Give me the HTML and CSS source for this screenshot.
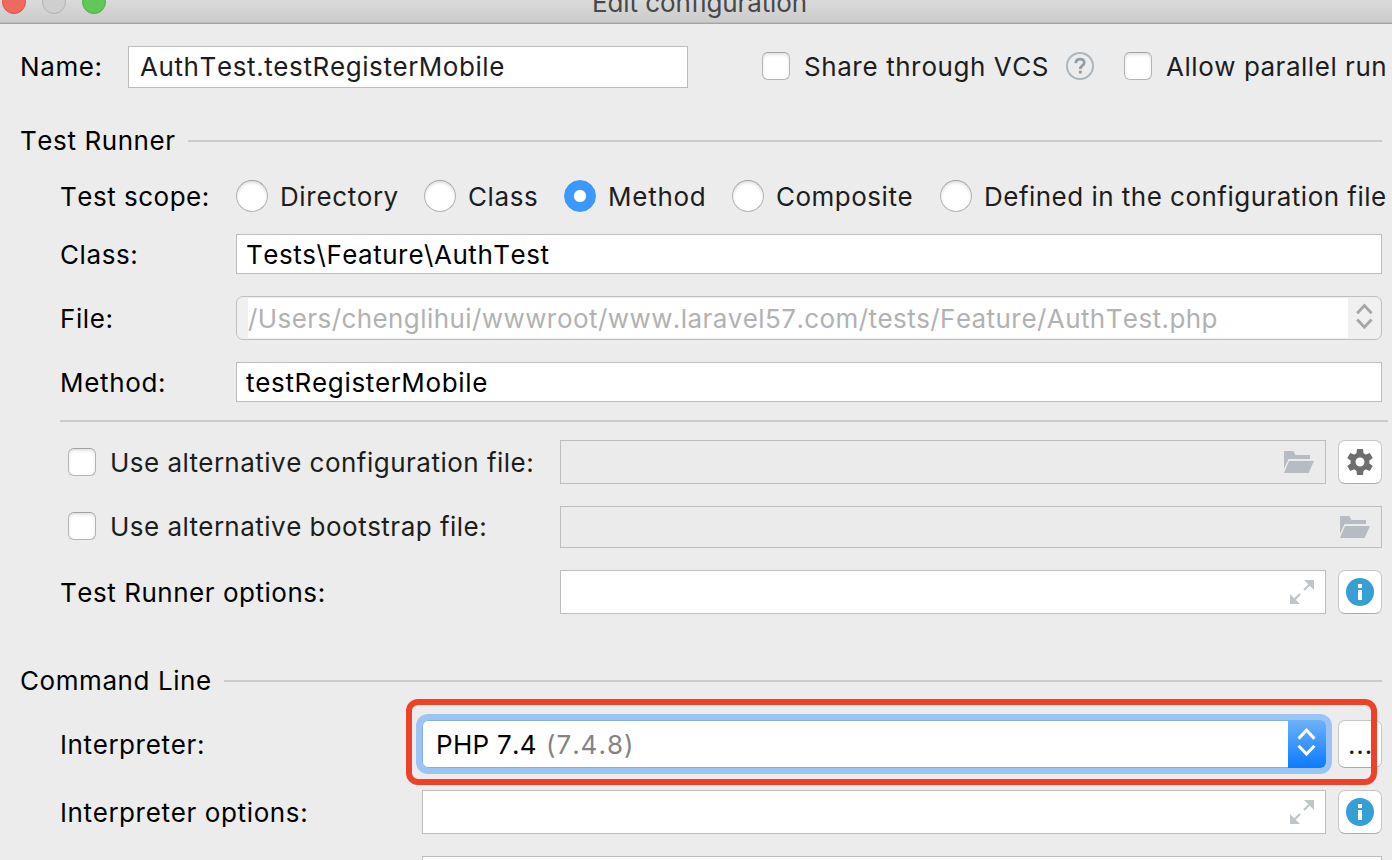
FILE: index.html
```html
<!DOCTYPE html>
<html lang="en">
<head>
<meta charset="utf-8">
<title>Edit configuration</title>
<link rel="stylesheet" href="styles.css">
</head>
<body>
<svg class="defs" width="0" height="0" aria-hidden="true">
  <symbol id="folder" viewBox="0 0 30 22">
    <path d="M0 0H9.3L11.5 4H26V8H4.6L0 17.8ZM5 10H30L24.6 22H0Z" fill="#b6bcc1"/>
  </symbol>
  <symbol id="expand" viewBox="0 0 24 24">
    <path d="M14 0H24V10ZM0 14V24H10Z" fill="#c0c5c9"/>
    <path d="M14 10L20 4M10 14L4 20" stroke="#c0c5c9" stroke-width="2.2"/>
  </symbol>
  <symbol id="info" viewBox="0 0 28 28">
    <circle cx="14" cy="14" r="14" fill="#389fd6"/>
    <path d="M12 6h4v4h-4zM12 12h4v10h-4z" fill="#fff"/>
  </symbol>
  <symbol id="gear" viewBox="-13 -13 26 26">
    <g fill="#6e6e6e">
      <path id="teeth" d="M-3 -13H3L3.6 -8H-3.6ZM-3 13H3L3.6 8H-3.6Z"/>
      <use href="#teeth" transform="rotate(60)"/>
      <use href="#teeth" transform="rotate(120)"/>
    </g>
    <circle r="7" fill="none" stroke="#6e6e6e" stroke-width="5"/>
  </symbol>
</svg>

<div class="titlebar">
  <span class="light red"></span><span class="light off"></span><span class="light green"></span>
  <span class="title">Edit configuration</span>
</div>

<main class="dialog">
  <div class="row name-row">
    <span class="name-label stem wide">Name:</span>
    <span class="field name-field">AuthTest.testRegisterMobile</span>
    <span class="check share"></span><span class="share-text">Share through VCS</span>
    <svg class="help" width="28" height="28" viewBox="0 0 28 28">
      <circle cx="14" cy="14" r="13" fill="none" stroke="#abb6be" stroke-width="2"/>
      <path d="M9.8 11.2C9.9 8.5 11.6 7.2 14.1 7.2C16.6 7.2 18.2 8.6 18.2 10.7C18.2 13.6 14.3 13.7 14.3 16.9" fill="none" stroke="#929ea7" stroke-width="2.7"/>
      <rect x="12.9" y="18.6" width="2.9" height="2.9" fill="#929ea7"/>
    </svg>
    <span class="check"></span><span class="check-text parallel">Allow parallel run</span>
  </div>

  <div class="row section runner"><span>Test Runner</span><i class="rule"></i></div>

  <div class="row scope-row">
    <span class="label text scope">Test scope:</span>
    <span class="radio"></span><span class="text opt directory">Directory</span>
    <span class="radio"></span><span class="text opt class-opt">Class</span>
    <span class="radio on"></span><span class="text opt method-opt">Method</span>
    <span class="radio"></span><span class="text opt composite">Composite</span>
    <span class="radio"></span><span class="text opt defined">Defined in the configuration file</span>
  </div>

  <div class="row class-row">
    <span class="label text">Class:</span>
    <span class="field fill"><span class="text class-value">Tests\Feature\AuthTest</span></span>
  </div>

  <div class="row file-row">
    <span class="label text stem wide">File:</span>
    <span class="filebox">
      <span class="path text">/Users/chenglihui/wwwroot/www.laravel57.com/tests/Feature/AuthTest.php</span>
      <svg class="stepper" width="32" height="42" viewBox="0 0 32 42"><path d="M8.7 16.2L15.9 8.6L23.1 16.2M8.7 22.6L15.9 30.2L23.1 22.6" fill="none" stroke="#a6a6a6" stroke-width="2.9"/></svg>
    </span>
  </div>

  <div class="row method-row">
    <span class="label text stem method-label">Method:</span>
    <span class="field fill"><span class="text method-value">testRegisterMobile</span></span>
  </div>

  <i class="separator"></i>

  <div class="row alt-row">
    <span class="alt-label"><span class="check"></span><span class="text alt-text">Use alternative configuration file:</span></span>
    <span class="field fill disabled icons"><svg width="30" height="22"><use href="#folder"/></svg></span>
    <span class="button"><svg width="26" height="26"><use href="#gear"/></svg></span>
  </div>

  <div class="row boot-row">
    <span class="alt-label"><span class="check"></span><span class="alt-text">Use alternative bootstrap file:</span></span>
    <span class="field fill disabled icons"><svg width="30" height="22"><use href="#folder"/></svg></span>
  </div>

  <div class="row options-row">
    <span class="runner-label text">Test Runner options:</span>
    <span class="field fill icons"><svg width="24" height="24"><use href="#expand"/></svg></span>
    <span class="button"><svg width="28" height="28"><use href="#info"/></svg></span>
  </div>

  <div class="row section command"><span>Command Line</span><i class="rule"></i></div>

  <div class="row interp-row">
    <span class="cmd-label text stem">Interpreter:</span>
    <span class="combo">
      <span class="text php">PHP 7.4</span><span class="text version">(7.4.8)</span>
      <svg class="arrows" width="38" height="48" viewBox="0 0 38 48"><path d="M10.6 18.6L18.5 10.3L26.4 18.6M10.6 25.8L18.5 34L26.4 25.8" fill="none" stroke="#fff" stroke-width="3"/></svg>
    </span>
    <span class="button dots">...</span>
    <span class="highlight"></span>
  </div>

  <div class="row cmd-row">
    <span class="cmd-label text stem">Interpreter options:</span>
    <span class="field fill icons"><svg width="24" height="24"><use href="#expand"/></svg></span>
    <span class="button"><svg width="28" height="28"><use href="#info"/></svg></span>
  </div>

  <div class="row next-row"><span class="cmd-label"></span><span class="field fill"></span></div>
</main>
</body>
</html>
```
FILE: styles.css
```css
* { box-sizing: border-box; }
html, body { margin: 0; height: 860px; overflow: hidden; }
body {
  background: #ececec;
  color: #000;
  font: 26px/30px Inter, "Liberation Sans", sans-serif;
  font-kerning: none;
  letter-spacing: .58px;
  white-space: nowrap;
}
.defs { display: block; position: absolute; }

.titlebar {
  display: flex;
  height: 24px;
  padding-left: 2px;
  gap: 16px;
  overflow: hidden;
  background: linear-gradient(#dadada, #cbcbcb);
  border-bottom: 1px solid #a3a3a3;
  box-shadow: inset 0 -1px #bcbcbc;
}
.light { flex: none; width: 24px; height: 24px; margin-top: -10px; border-radius: 50%; border: 1px solid; }
.light.red { background: #ee6a5f; border-color: #e0524a; }
.light.off { background: #cfcfcf; border-color: #b3b3b3; }
.light.green { background: #62c756; border-color: #51ae42; }
.title { margin: -12px 0 0 470px; color: #484848; letter-spacing: -.1px; }

.row { display: flex; align-items: center; padding-right: 10px; }
.text { padding-top: 2px; }
.wide { letter-spacing: .6px; }
.label { flex: none; width: 236px; padding-left: 60px; }
.scope { letter-spacing: .5px; }
.method-label { letter-spacing: .67px; }
.field { height: 100%; flex: none; display: flex; align-items: center; background: #fff; border: 1px solid #bdbdbd; }
.fill { flex: 1; }
.disabled { background: #ebebeb; }
.icons { justify-content: flex-end; padding-right: 11px; }
.check {
  flex: none; width: 28px; height: 28px; border-radius: 6px; background: #fff;
  border: 1px solid #b4b4b4; border-top-color: #a2a2a2; box-shadow: inset 0 2px 3px #e3e3e3;
}
.check-text, .alt-text, .opt, .share-text, .name-field { color: #1d1d1d; }

.name-row { height: 42px; margin-top: 22px; padding: 0; }
.name-label { width: 128px; padding-left: 20px; }
.name-field { width: 560px; padding-left: 11px; letter-spacing: .6px; }
.share { margin: -2px 14px 0 74px; }
.share-text { width: 262px; letter-spacing: .54px; }
.name-row .check { margin-top: -2px; }
.help { flex: none; margin: -2px 30px 0 0; display: block; }
.parallel { margin-left: 14px; letter-spacing: .54px; }

.section { height: 28px; padding-left: 20px; }
.runner { margin-top: 39px; gap: 12px; }
.command { margin-top: 53px; gap: 12px; letter-spacing: .57px; }
.rule { flex: 1; height: 2px; background: #cbcbcb; }

.scope-row { height: 32px; margin-top: 25px; padding: 0; }
.radio {
  flex: none; width: 32px; height: 32px; border-radius: 50%; background: #fff;
  border: 1px solid #b4b4b4; border-top-color: #9f9f9f; box-shadow: inset 0 2px 3px #e0e0e0;
}
.radio.on { background: radial-gradient(circle, #fff 5.6px, #3b99fc 6.6px); border-color: #3b99fc; box-shadow: none; }
.opt { flex: none; padding-left: 12px; }
.directory { width: 156px; }
.class-opt { width: 108px; }
.method-opt { width: 136px; letter-spacing: .75px; }
.composite { width: 176px; letter-spacing: .5px; }
.defined { letter-spacing: .48px; }

.class-row { height: 40px; margin-top: 22px; }
.class-value { padding-left: 9px; letter-spacing: .53px; }
.file-row { height: 44px; margin-top: 22px; }
.filebox { display: flex; flex: 1; height: 44px; border: 1px solid #bfbfbf; border-radius: 7px; background: #f0f0f0; padding-left: 11px; overflow: hidden; }
.path { flex: 1; margin: 0; padding-top: 6px; background: #fff; color: #b2b2b2; letter-spacing: .42px; border-top: 1px solid #ededed; border-bottom: 1px solid #ededed; }
.stepper { width: 33px; flex: none; display: block; }
.method-row { height: 40px; margin-top: 22px; }
.method-value { padding-left: 9px; letter-spacing: .67px; }
.separator { display: block; height: 2px; margin: 18px 4px 0 60px; background: #cbcbcb; }

.alt-label { display: flex; flex: none; align-items: center; width: 560px; padding-left: 68px; gap: 14px; letter-spacing: .49px; }
.boot-row .check { margin-top: -2px; }
.alt-row { height: 44px; margin-top: 18px; }
.boot-row { height: 42px; margin-top: 22px; }
.options-row { height: 44px; margin-top: 22px; }
.runner-label { width: 560px; padding-left: 60px; letter-spacing: .53px; }
.button {
  flex: none; width: 44px; height: 100%; margin-left: 12px; display: flex; align-items: center; justify-content: center;
  background: #fff; border: 1px solid #c6c6c6; border-bottom-color: #ababab; border-radius: 7px;
}

.cmd-label { flex: none; width: 422px; padding-left: 60px; letter-spacing: .62px; }
.interp-row { position: relative; height: 48px; margin-top: 25px; }
.combo {
  display: flex; align-items: center; flex: 1; height: 48px; padding-left: 14px; border-radius: 6px;
  background: #fff; box-shadow: 0 0 0 6px #9bc3f4, inset 0 0 0 1px #86afe0;
}
.php { letter-spacing: .3px; }
.version { margin-left: 9px; color: #838383; letter-spacing: .99px; }
.arrows { margin-left: auto; background: linear-gradient(#6cb3fa, #0a7bff); border-radius: 0 6px 6px 0; }
.dots { padding: 2px 0 0 1px; color: #1d1d1d; letter-spacing: .9px; }
.highlight { position: absolute; left: 405.5px; top: -21px; width: 971px; height: 86px; border: 6px solid #ee4128; border-radius: 12px; }
.cmd-row { height: 44px; margin-top: 22px; }
.next-row { height: 44px; margin-top: 22px; }
```
